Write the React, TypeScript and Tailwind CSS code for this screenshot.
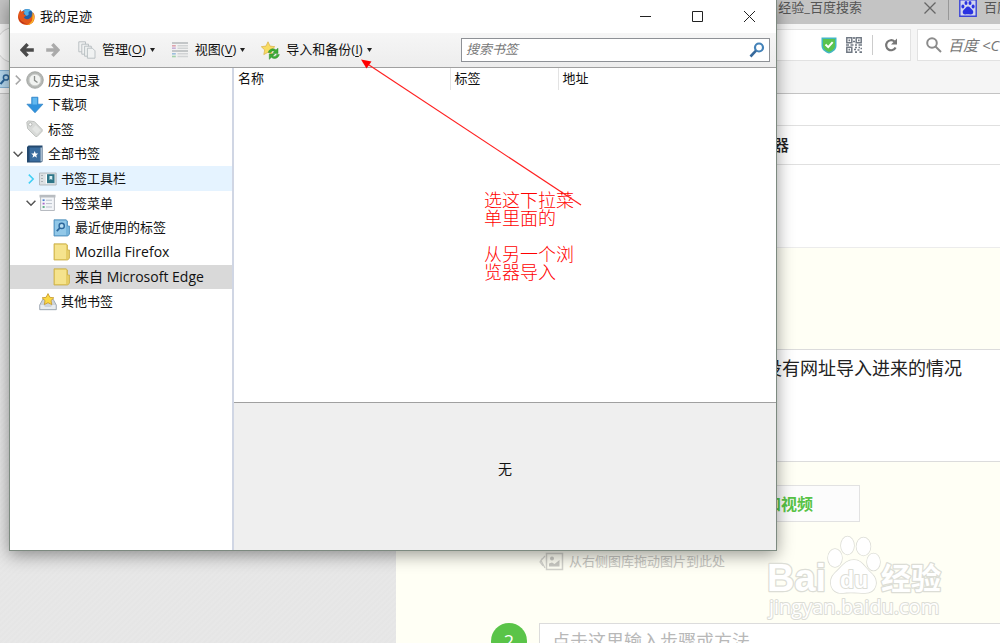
import React from 'react';
import { clsx } from 'clsx';

const FirefoxIcon = () => (
  <svg className="w-[17px] h-[17px]" viewBox="0 0 32 32">
    <circle cx="17" cy="14" r="12" fill="#1f5fa8" />
    <path d="M10 6c4-5 12-5 16 0-5-1-7 1-6 5 1 3-3 4-6 3z" fill="#4fb0e6" />
    <path d="M2 8c1-2 2-4 3-5 0 2 1 3 2 4 2-1 4-1 6 0-2 1-3 3-2 5l4 1c0 2-2 3-4 4 1 4 6 5 10 3 4-1 6-5 5-9 2 2 2 4 2 6 1-3 1-7-1-10 4 3 5 8 4 13-1 7-7 12-15 12C7 32 0 25 0 17c0-4 1-7 2-9z" fill="#e2571b" />
    <path d="M26 8c4 3 5 8 4 13-1 6-6 10-13 11 6-3 10-7 10-12 0-4 1-8-1-12z" fill="#f9b825" />
    <path d="M1 14c1 8 7 14 15 15-8 3-15-4-15-15z" fill="#b9301a" />
  </svg>
);

const ClockIcon = () => (
  <svg className="w-[18px] h-[18px]" viewBox="0 0 18 18">
    <circle cx="9" cy="9" r="8.3" fill="#b4b7b4" stroke="#9da09d" strokeWidth="0.8" />
    <circle cx="9" cy="9" r="5.8" fill="#f1f3f1" stroke="#cfd1cf" />
    <path d="M8.5 5v4.4l3 2.1" fill="none" stroke="#8b8e8b" strokeWidth="1.3" />
  </svg>
);

const DownloadIcon = () => (
  <svg className="w-[18px] h-[18px]" viewBox="0 0 18 18">
    <path d="M5.7 1.2h6.2v7h5L9 16.8.9 8.2h4.8z" fill="#2f92dd" stroke="#2a7fc4" strokeWidth="0.7" />
    <path d="M6.5 2h4.6v6.5H6.5z" fill="#62b8ef" />
  </svg>
);

const TagIcon = () => (
  <svg className="w-[18px] h-[18px]" viewBox="0 0 18 18">
    <path d="M.8 2.2 2.4.9l6 .7 7.8 8-.1 1.7-5 5.2-1.6-.1L1.6 8.6z" fill="#d8dad8" stroke="#b9bcb9" strokeWidth="0.9" />
    <circle cx="4.3" cy="4.4" r="1.6" fill="#fff" stroke="#999c99" strokeWidth="0.6" />
    <path d="m6 9 5 5 3.6-3.8-4.8-5z" fill="#e4e6e4" />
  </svg>
);

const BookIcon = () => (
  <svg className="w-[18px] h-[18px]" viewBox="0 0 18 18">
    <path d="M1 2 2.5.5h14v16l-1.500 1H1z" fill="#24496f" />
    <path d="M3.5 2.5h11v14h-11z" fill="#3a6c9e" />
    <path d="M14.5 2.5h1.4v14h-1.4z" fill="#b9cbdc" />
    <path d="m8.7 6.1 1 2.3 2.5.2-1.9 1.6.6 2.5-2.2-1.4-2.2 1.4.6-2.5-1.9-1.6 2.5-.2z" fill="#fff" />
  </svg>
);

const ToolbarFolderIcon = () => (
  <svg className="w-[18px] h-[18px]" viewBox="0 0 18 18">
    <path d="M.5 3h16.7v12H.5z" fill="#dde1e4" stroke="#a9aeb2" strokeWidth="0.8" />
    <path d="M2 5.5h2M2 8.5h2M2 11.5h2" stroke="#adb3b7" />
    <path d="M6.8 4.3h8.5v9.4H6.8z" fill="#fff" />
    <path d="M8 4.2h7.5v9H8z" fill="#2e7689" />
    <path d="M10.5 6h2.8v4l-1.4-1-1.4 1z" fill="#d8eef3" />
  </svg>
);

const MenuFolderIcon = () => (
  <svg className="w-[18px] h-[18px]" viewBox="0 0 18 18">
    <path d="M1.6 2.5h13.8v14H1.6z" fill="#f3f5f8" stroke="#a6abb1" strokeWidth="0.8" />
    <path d="M.5.8h16v2.7H.5z" fill="#b8bcc0" />
    <path d="M3.6 6.2h2" stroke="#487ed0" strokeWidth="1.7" />
    <path d="M3.6 9.6h2" stroke="#a765c8" strokeWidth="1.7" />
    <path d="M3.6 13h2" stroke="#4aa378" strokeWidth="1.7" />
    <path d="M7 6.2h6M7 9.6h6M7 13h6" stroke="#b9c0ca" />
  </svg>
);

const SmartFolderIcon = () => (
  <svg className="w-[18px] h-[18px]" viewBox="0 0 18 18">
    <path d="M1 .8h12l1.5 1.2v5h2v8l-1.7 2H1z" fill="#74b3db" stroke="#4b8cb9" strokeWidth="0.8" />
    <path d="M2 1.8h11V16H2z" fill="#92c8e8" />
    <circle cx="8.7" cy="6.9" r="2.6" fill="#b8def2" stroke="#2b669b" strokeWidth="1.4" />
    <path d="m6.8 9-3 3.2" stroke="#2b669b" strokeWidth="1.8" />
  </svg>
);

const FolderIcon = () => (
  <svg className="w-[18px] h-[18px]" viewBox="0 0 18 18">
    <path d="M1 .8h12l1.5 1.2v5h2v8l-1.7 2H1z" fill="#e6cd66" stroke="#c9ad4a" strokeWidth="0.8" />
    <path d="M2 1.8h11V16H2z" fill="#f5e38d" />
  </svg>
);

const UnsortedIcon = () => (
  <svg className="w-[18px] h-[18px]" viewBox="0 0 18 18">
    <path d="M4 6h10l3.3 6v4.7H.7V12z" fill="#cdd4dc" stroke="#8f9aa6" strokeWidth="0.8" />
    <path d="M1.5 12h3l1.5 2h6l1.5-2h3v4h-15z" fill="#e8ecf0" />
    <path d="m9 .6 1.9 3.7 4 .5-2.9 2.8.8 4L9 9.7l-3.7 1.9.7-4-2.9-2.8 4-.5z" fill="#fbd945" stroke="#c4952a" strokeWidth="0.8" />
  </svg>
);

const OrganizeIcon = () => (
  <svg className="w-[18px] h-[18px]" viewBox="0 0 18 18" fill="#f0f2f2" stroke="#b6bcbf" strokeWidth="0.9">
    <path d="M.8.8h6.7v10H.8z" />
    <path d="M3.8 3.2h6.7v10H3.8z" />
    <path d="M6.6 5.2h6.7v10H6.6z" />
    <path d="M9.4 7.2h5l2.6 2.6v7.4H9.4z" />
  </svg>
);

const ViewsIcon = () => (
  <svg className="w-[18px] h-[18px] opacity-75" viewBox="0 0 18 18">
    <path d="M1 2h16M1 10h16" stroke="#b4b8ba" strokeWidth="2" />
    <path d="M6.5 4.8h10.5M6.5 7.2h10.5M6.5 12.8h10.5M6.5 15.5h10.5" stroke="#c7cacc" strokeWidth="1.5" />
    <path d="M1 4.8h3.8" stroke="#d98a96" strokeWidth="1.6" />
    <path d="M1 7.2h3.8" stroke="#b899cf" strokeWidth="1.6" />
    <path d="M1 12.8h3.8" stroke="#83aed7" strokeWidth="1.6" />
    <path d="M1 15.5h3.8" stroke="#89c791" strokeWidth="1.6" />
  </svg>
);

const ImportIcon = () => (
  <svg className="w-[19px] h-[19px]" viewBox="0 0 19 19">
    <path d="m7 .8 2 4.3 4.8.6-3.5 3.2.9 4.7L7 11.3l-4.2 2.3.9-4.7L.3 5.7 5 5.1z" fill="#f8dc62" stroke="#dcb650" strokeWidth="0.8" />
    <path d="M7.3 11.4c.7-3.4 4.9-4.8 7.7-2.5l2-1.7v5.2h-5.4l1.9-1.9c-1.5-1.1-3.2-.5-3.7.9z" fill="#3cab35" stroke="#2f8f2c" strokeWidth="0.5" />
    <path d="M18.3 13.4c-.8 3.9-5.1 5.3-7.9 2.9l-2.1 2v-5.2h5.4l-1.9 1.8c1.5 1.1 3.4.5 3.9-1.5z" fill="#3cab35" stroke="#2f8f2c" strokeWidth="0.5" />
  </svg>
);

const BackArrow = ({ className }: { className: string }) => (
  <svg className={clsx("w-[14px] h-[14px]", className)} viewBox="0 0 14 14" fill="none" stroke="currentColor" strokeWidth="3.4">
    <path d="M7.6 1.2 2.2 7l5.4 5.8M2.5 7h11.3" />
  </svg>
);

const BaiduPaw = () => (
  <svg className="w-[18px] h-[18px] shrink-0" viewBox="0 0 18 18">
    <path d="M.8.8h16.4v16.4H.8z" fill="#d3d6ee" stroke="#3a44d8" strokeWidth="1.4" />
    <g fill="#2932e1">
      <ellipse cx="3.9" cy="7.6" rx="1.5" ry="2" />
      <ellipse cx="7" cy="4" rx="1.5" ry="2.1" />
      <ellipse cx="11" cy="4" rx="1.5" ry="2.1" />
      <ellipse cx="14.1" cy="7.6" rx="1.5" ry="2" />
      <path d="M9 7.4c2 0 2.5 2 4.2 3.4 2 1.8 1 4.8-1.4 4.7-2 0-3.6-.4-5.6 0-2.4.1-3.4-2.9-1.4-4.7C6.5 9.4 7 7.4 9 7.4z" />
    </g>
  </svg>
);

const QrIcon = () => (
  <svg className="w-4 h-4" viewBox="0 0 16 16" fill="none" stroke="#717984" strokeWidth="1.5">
    <path d="M.8.8h5v5h-5zM10.2.8h5v5h-5zM.8 10.2h5v5h-5z" />
    <path d="M2.5 3.3h1.6M12 3.3h1.6M2.5 12.7h1.6M8 0v2M7 4.5h2M0 8h3M4.5 8h3M9 8h2M12.5 8h3.5M9 10.5h2M12.5 10.5H14M8 12.5h2M11.5 13h2M9 15.2h2M13.5 15.2H16M14.5 11.5h1.5" strokeWidth="1.7" />
  </svg>
);

const Caret = () => (
  <svg className="w-[5px] h-[4px] ml-1" viewBox="0 0 5 4"><path d="M0 0h5L2.5 4z" fill="#222" /></svg>
);

const tree = [
  { label: "历史记录", icon: ClockIcon, level: 0, twisty: "closed" },
  { label: "下载项", icon: DownloadIcon, level: 0 },
  { label: "标签", icon: TagIcon, level: 0 },
  { label: "全部书签", icon: BookIcon, level: 0, twisty: "open" },
  { label: "书签工具栏", icon: ToolbarFolderIcon, level: 1, twisty: "closed", hover: true },
  { label: "书签菜单", icon: MenuFolderIcon, level: 1, twisty: "open" },
  { label: "最近使用的标签", icon: SmartFolderIcon, level: 2 },
  { label: "Mozilla Firefox", icon: FolderIcon, level: 2, latin: true },
  { label: "来自 Microsoft Edge", icon: FolderIcon, level: 2, latin: true, selected: true },
  { label: "其他书签", icon: UnsortedIcon, level: 1 },
];

const indents = ["pl-0", "pl-[13px]", "pl-[27px]"];

const TreeRow = ({ label, icon: Icon, level, twisty, hover, selected, latin }: any) => (
  <li className="flex flex-1">
    <button
      className={clsx(
        "flex flex-1 items-center text-left whitespace-nowrap",
        indents[level],
        latin && "text-sm",
        hover && "bg-[#e5f3ff]",
        selected && "bg-[#d9d9d9]"
      )}
    >
      <span className="w-4 flex justify-center">
        {twisty && (
          <svg
            className={clsx(
              "w-[10px] h-[10px]",
              twisty === "open" ? "rotate-90 text-[#555]" : hover ? "text-[#3fd0f5]" : "text-[#a6a6a6]"
            )}
            viewBox="0 0 10 10" fill="none" stroke="currentColor" strokeWidth="1.5"
          >
            <path d="m2.8.6 4.4 4.4-4.4 4.4" />
          </svg>
        )}
      </span>
      <Icon />
      <span className="ml-1">{label}</span>
    </button>
  </li>
);

const MenuButton = ({ icon, label, accessKey }: any) => (
  <button className="flex items-center whitespace-nowrap">
    {icon}
    <span className="ml-[6px]">{label}(<u className="underline-offset-2">{accessKey}</u>)</span>
    <Caret />
  </button>
);

function LibraryWindow() {
  return (
    <div className="absolute top-0 left-[9px] right-[223px] flex flex-col bg-white border border-t-0 border-[#7d8a80] shadow-[0_4px_16px_rgba(0,0,0,0.4)] text-[13px] text-[#111]">
      <header className="flex items-center h-[33px] pl-2 pr-px">
        <FirefoxIcon />
        <h1 className="ml-[5px]">我的足迹</h1>
        <div className="ml-auto flex">
          <button aria-label="最小化" className="w-[52px] h-8 flex items-center justify-center">
            <svg className="w-[11px] h-[11px]" viewBox="0 0 11 11"><path d="M0 5.5h11" stroke="#222" /></svg>
          </button>
          <button aria-label="最大化" className="w-[52px] h-8 flex items-center justify-center">
            <svg className="w-[11px] h-[11px]" viewBox="0 0 11 11"><path d="M.5.5h10v10H.5z" fill="none" stroke="#222" /></svg>
          </button>
          <button aria-label="关闭" className="w-[52px] h-8 flex items-center justify-center">
            <svg className="w-[11px] h-[11px]" viewBox="0 0 11 11"><path d="m0 0 11 11M11 0 0 11" stroke="#222" /></svg>
          </button>
        </div>
      </header>

      <div className="flex items-center h-[35px] pl-[10px] pr-[6px] bg-linear-to-b from-[#f6f6f6] to-[#ededed] border-b border-[#a0a0a0]">
        <button aria-label="后退"><BackArrow className="text-[#4a4a4a]" /></button>
        <button aria-label="前进" className="ml-3"><BackArrow className="rotate-180 text-[#aaa]" /></button>
        <div className="ml-[18px] flex gap-4">
          <MenuButton icon={<OrganizeIcon />} label="管理" accessKey="O" />
          <MenuButton icon={<ViewsIcon />} label="视图" accessKey="V" />
          <MenuButton icon={<ImportIcon />} label="导入和备份" accessKey="I" />
        </div>
        <label className="ml-auto flex items-center w-[309px] h-6 px-1 bg-white border border-[#8e9196]">
          <input type="text" aria-label="搜索书签" placeholder="搜索书签" className="flex-1 min-w-0 italic outline-none placeholder:text-[#777]" />
          <svg className="w-4 h-4" viewBox="0 0 16 16" fill="none">
            <circle cx="10" cy="5.5" r="4" stroke="#4482b8" strokeWidth="2.2" />
            <path d="m7 8.7-5.5 5.8" stroke="#36699c" strokeWidth="2.6" />
          </svg>
        </label>
      </div>

      <div className="flex">
        <nav className="w-[224px] shrink-0 border-r-2 border-[#d0d6e4]">
          <ul className="flex flex-col h-[246px]">
            {tree.map((row) => <TreeRow key={row.label} {...row} />)}
          </ul>
        </nav>

        <div className="flex-1 min-w-0 flex flex-col">
          <div className="h-[334px]">
            <table className="w-full table-fixed text-left">
              <thead>
                <tr className="h-[22px]">
                  <th className="w-[216px] pl-1 font-normal border-r border-[#e3e3e3]">名称</th>
                  <th className="w-[108px] pl-1 font-normal border-r border-[#e3e3e3]">标签</th>
                  <th className="pl-1 font-normal">地址</th>
                </tr>
              </thead>
            </table>
          </div>
          <div className="flex items-center justify-center h-[148px] pb-4 bg-[#efefef] border-t border-[#a0a0a0] text-sm">无</div>
        </div>
      </div>

      {/* Callout */}
      <div className="absolute left-[474px] top-[191px] w-[91px] text-lg leading-[18px] font-light text-[#ff0000]">
        <p>选这下拉菜单里面的</p>
        <p className="mt-[18px]">从另一个浏览器导入</p>
      </div>
      <svg className="absolute left-[350px] top-[58px] w-[224px] h-[150px] pointer-events-none" viewBox="0 0 224 150">
        <path d="M6 5 221 147" stroke="#ff2020" strokeWidth="1.2" />
        <path d="M1 1.5 11.5 3.5 6.5 10.5z" fill="#ff0000" />
      </svg>
    </div>
  );
}

function BrowserChrome() {
  return (
    <header className="text-[13px] text-[#555]">
      <div className="flex items-center justify-end h-6 pb-2 bg-[#c4c4c4] overflow-hidden whitespace-nowrap">
        <span>经验_百度搜索</span>
        <button aria-label="关闭标签页" className="ml-[62px]">
          <svg className="w-3 h-3" viewBox="0 0 12 12"><path d="m.5.5 11 11M11.5.5l-11 11" stroke="#666" strokeWidth="1.3" /></svg>
        </button>
        <span className="ml-3 h-6 border-l border-[#989898]" />
        <span className="ml-[10px]"><BaiduPaw /></span>
        <span className="ml-[7px] w-4 overflow-hidden">百度</span>
      </div>
      <div className="h-[70px] bg-[#f5f5f5] border-b border-[#c3c3c3]">
        <div className="flex items-center h-[42px]">
          <span className="-ml-1 w-9 h-9 rounded-full border border-[#d2d2d2] bg-[#fafafa]" />
          <div className="flex-1 flex items-center justify-end h-8 pr-3 bg-white border border-[#e2e2e2]">
            <svg className="w-4 h-[17px]" viewBox="0 0 16 17">
              <path d="M.5.5h15v8c0 4-3 6.5-7.5 8-4.5-1.5-7.5-4-7.5-8z" fill="#42b7c3" />
              <path d="M2 2h12v6.5c0 3-2 5-6 6.5-4-1.5-6-3.5-6-6.5z" fill="#5ac34e" />
              <path d="m4.5 7.5 2.7 2.6 4.5-5" fill="none" stroke="#fff" strokeWidth="2" />
            </svg>
            <span className="ml-[9px]"><QrIcon /></span>
            <span className="ml-[10px] h-5 border-l border-[#ccc]" />
            <button aria-label="刷新" className="ml-[11px]">
              <svg className="w-[14px] h-[14px]" viewBox="0 0 14 14">
                <path d="M11.6 9.5A5 5 0 1 1 10.5 3.5" fill="none" stroke="#777" strokeWidth="2.2" />
                <path d="M13 .5v6H7z" fill="#777" />
              </svg>
            </button>
          </div>
          <label className="ml-[6px] w-[83px] h-8 flex items-center pl-2 bg-white border border-r-0 border-[#e2e2e2]">
            <svg className="w-4 h-4 shrink-0" viewBox="0 0 16 16" fill="none" stroke="#8b8b8b" strokeWidth="2">
              <circle cx="6" cy="6" r="4.8" /><path d="m9.5 9.5 5.5 5.5" />
            </svg>
            <input type="text" aria-label="百度" placeholder="百度 <C" className="ml-[6px] min-w-0 flex-1 text-[15px] italic outline-none placeholder:text-[#777]" />
          </label>
        </div>
        <button aria-label="书签" className="mt-1 w-[30px] h-[18px] flex items-center border border-l-0 border-[#88b5d6] bg-[#b9dcf2]">
          <svg className="w-[10px] h-3" viewBox="0 0 10 12" fill="none" stroke="#2b669b">
            <circle cx="6" cy="4.5" r="2.6" strokeWidth="1.5" /><path d="M4 7 .5 11" strokeWidth="2" />
          </svg>
        </button>
      </div>
    </header>
  );
}

const Watermark = () => (
  <svg className="absolute right-[52px] bottom-[22px] w-[184px] h-[88px]" viewBox="0 0 184 88" fill="#fff" stroke="#dcddd6" strokeWidth="2.5" paintOrder="stroke" strokeLinejoin="round">
    <g strokeWidth="1.5">
      <ellipse cx="71" cy="25" rx="7" ry="9" />
      <ellipse cx="83.5" cy="12.5" rx="6.5" ry="9" />
      <ellipse cx="99.5" cy="13.5" rx="7" ry="9" />
      <ellipse cx="109.5" cy="29" rx="6.5" ry="8.5" />
      <path d="M90 27c8 0 11 8 17 13 9 8 5 20-6 20-6 0-15-1-22 0-12 1-16-12-8-20 7-6 10-13 19-13z" />
    </g>
    <text x="3" y="58" fontSize="38" fontWeight="700" fontFamily="Liberation Sans, Arial, sans-serif">Bai</text>
    <text x="76" y="55" fontSize="23" fontWeight="700" strokeWidth="2" fontFamily="Liberation Sans, Arial, sans-serif">du</text>
    <text x="117" y="56" fontSize="30" fontWeight="700" fontFamily="Noto Sans CJK SC, sans-serif">经验</text>
    <text x="5" y="81" fontSize="20" fontWeight="500" strokeWidth="2" fontFamily="Open Sans, sans-serif">jingyan.baidu.com</text>
  </svg>
);

function EditorPage() {
  return (
    <div className="flex flex-1">
      <aside className="w-[396px] shrink-0 bg-[repeating-linear-gradient(135deg,#e5e5e5_0px,#e8e8e8_2px,#e5e5e5_4px)]" />
      <main className="flex-1 min-w-0 bg-[#fffff5]">
        <div className="h-8 bg-white border-b border-[#e0e0e0]" />
        <h2 className="h-[39px] pl-[377px] flex items-center bg-white border-b border-[#e0e0e0] text-base font-medium text-[#222]">器</h2>
        <div className="h-[83px] bg-white border-b border-[#ececec]" />
        <div className="pt-[101px] pl-[143px]">
          <textarea
            aria-label="步骤内容"
            defaultValue="没有网址导入进来的情况"
            className="block w-full h-[113px] pt-1 pl-[224px] resize-none bg-white border border-r-0 border-[#dcdcdc] text-lg text-[#222] outline-none"
          />
          <button className="mt-[23px] w-[321px] h-[37px] pr-[46px] block text-right bg-[#fcfcfc] border border-[#e2e2e2] text-base font-bold text-[#58c346]">
            加视频
          </button>
          <div className="mt-7 h-6 flex items-center gap-[5px] text-[13px] text-[#c6c6c0]">
            <svg className="w-[25px] h-[20px]" viewBox="0 0 25 20" fill="none" stroke="#d2d2cc" strokeWidth="1.5">
              <path d="M7.5 1.5h16v16h-16z" />
              <path d="M6 4 2 8.5 6 16M3.5 6 1 10l3 4" strokeWidth="1.2" />
              <circle cx="13" cy="6.5" r="2" fill="#c9c9c3" stroke="none" />
              <path d="M10 14.5v-3l3-1 2.5 1.5 5-4v6.5z" fill="#c9c9c3" stroke="none" />
            </svg>
            从右侧图库拖动图片到此处
          </div>
        </div>
        <div className="mt-[49px] pl-[95px] flex">
          <span className="w-9 h-9 shrink-0 rounded-full bg-[#5ac448] text-white text-lg leading-9 text-center">2</span>
          <input
            type="text"
            aria-label="步骤二"
            placeholder="点击这里输入步骤或方法"
            className="ml-3 flex-1 min-w-0 h-9 px-3 bg-white border border-r-0 border-[#dcdcdc] text-lg outline-none placeholder:text-[#b8b8b8]"
          />
        </div>
      </main>
    </div>
  );
}

export default function App() {
  return (
    <div className="relative h-screen overflow-hidden flex flex-col bg-[#fffff5] font-['Open_Sans','Noto_Sans_CJK_SC',sans-serif]">
      <BrowserChrome />
      <EditorPage />
      <LibraryWindow />
      <Watermark />
    </div>
  );
}
